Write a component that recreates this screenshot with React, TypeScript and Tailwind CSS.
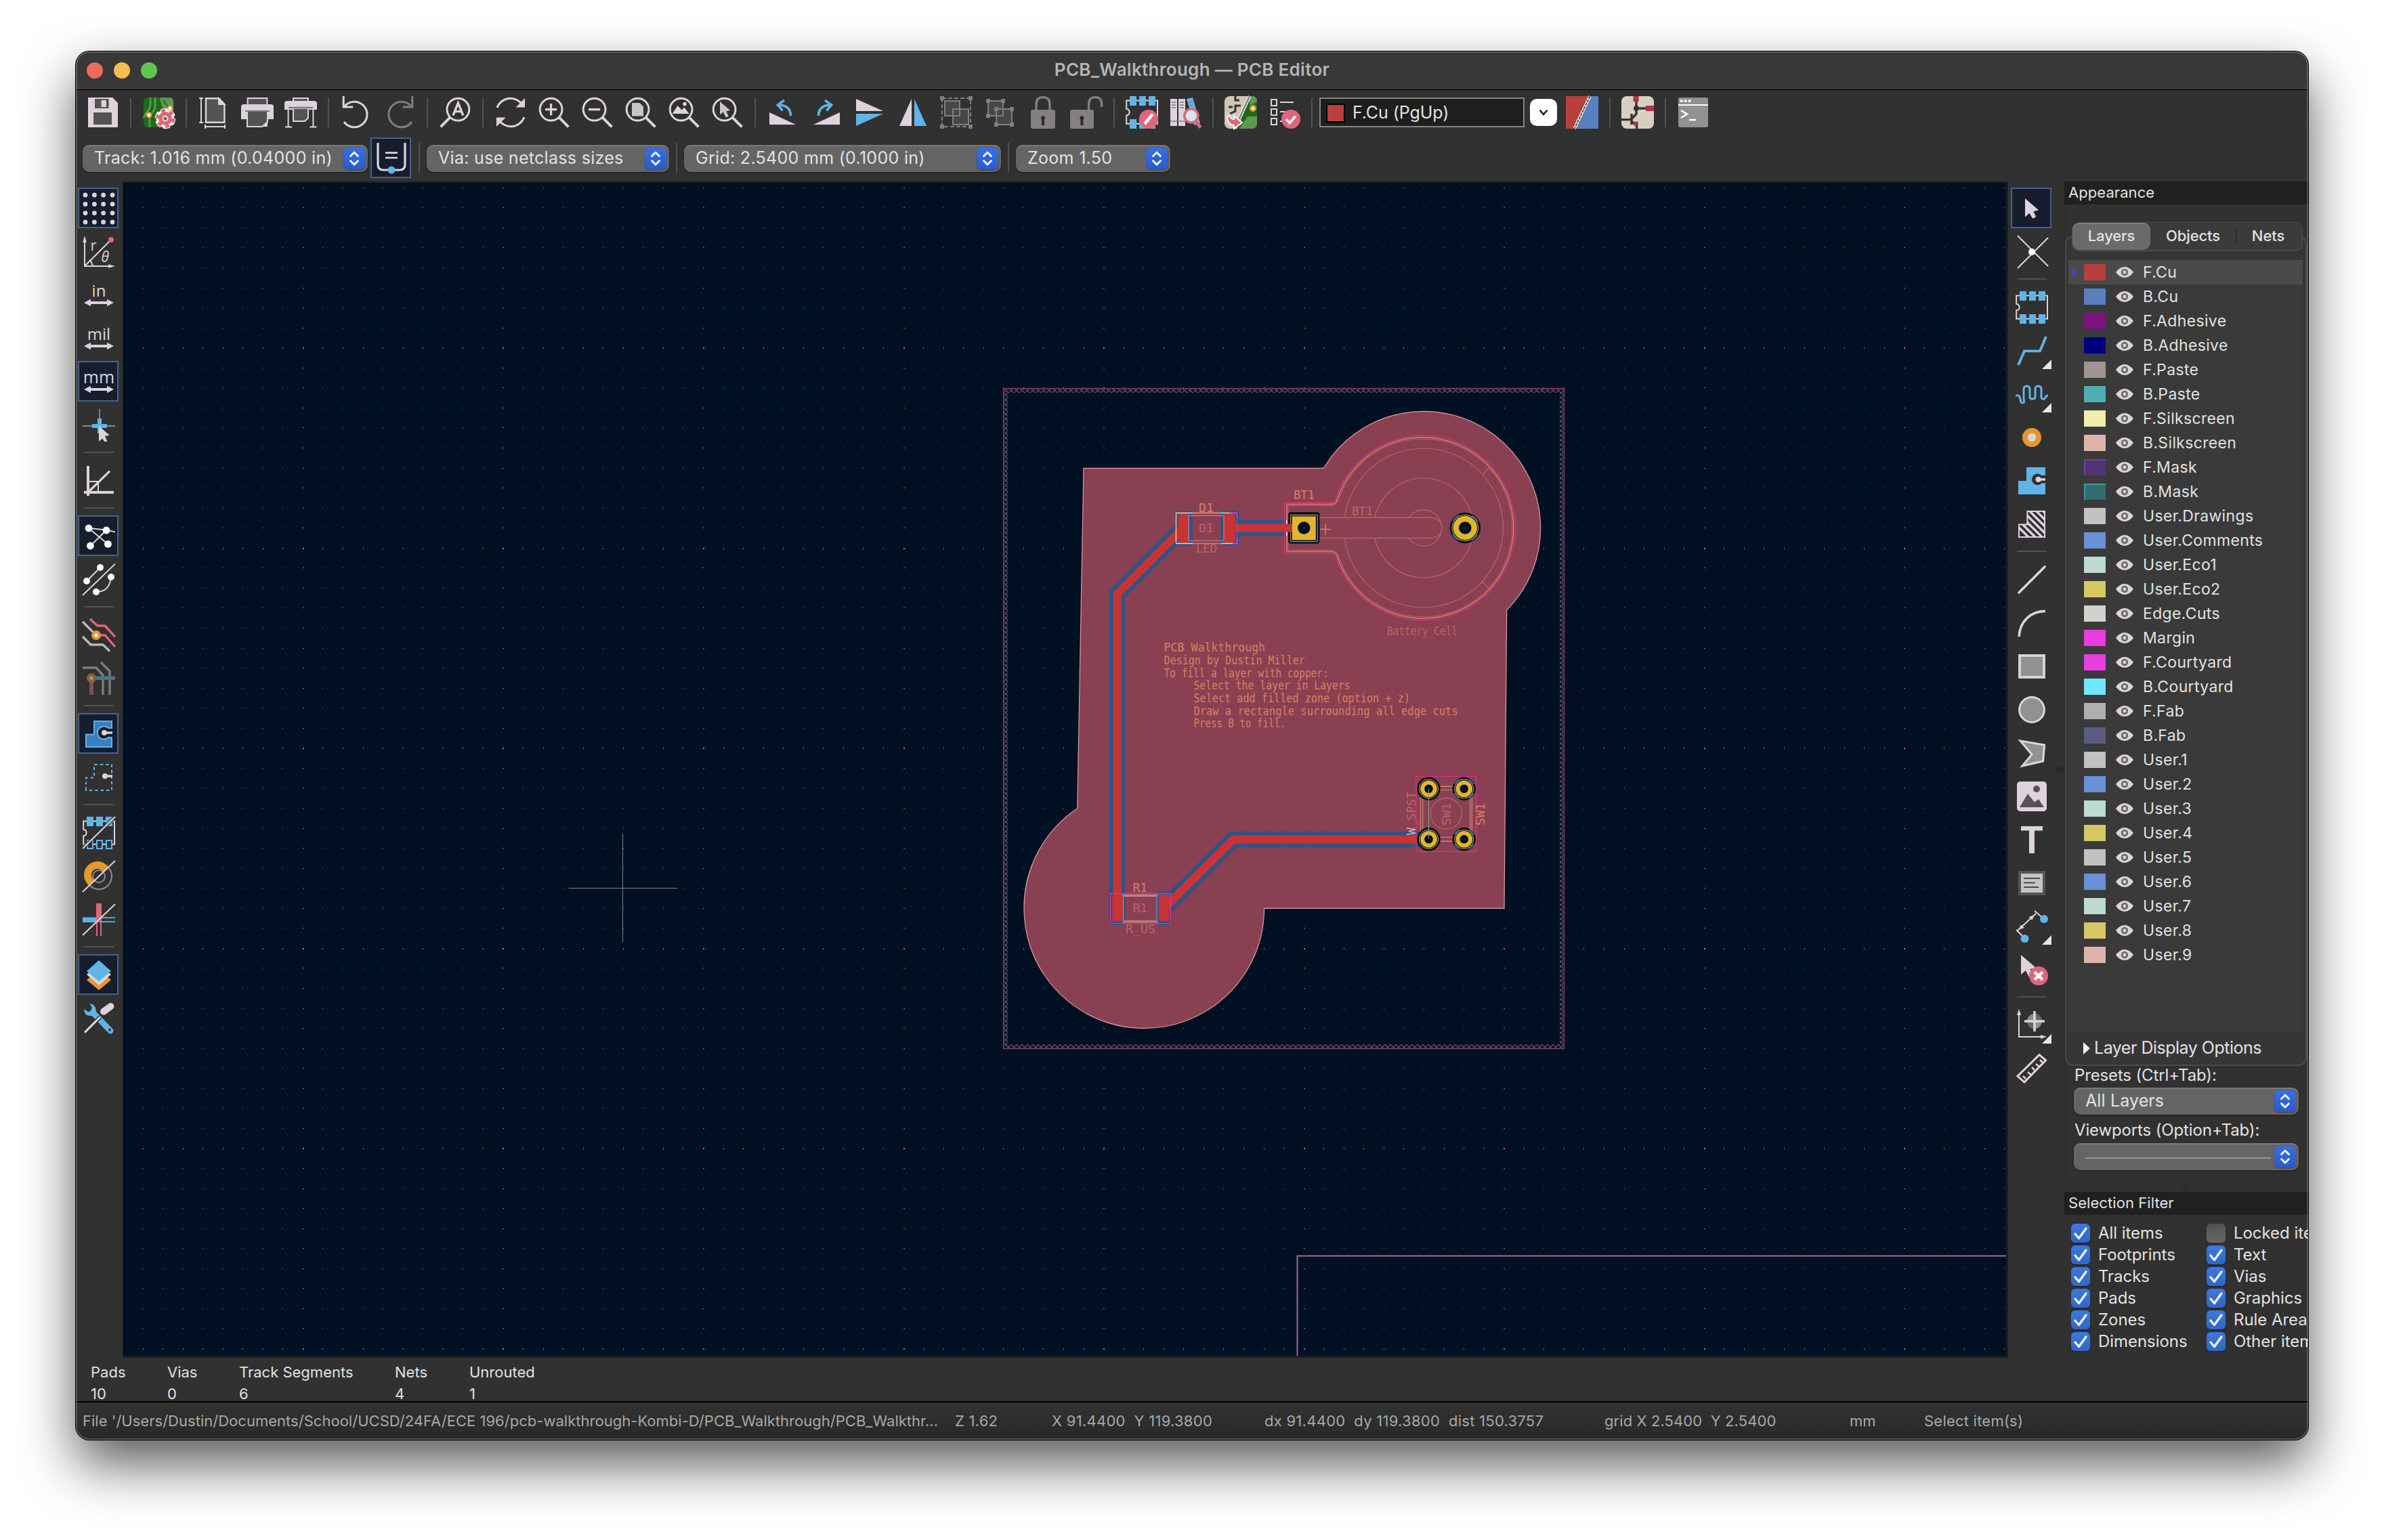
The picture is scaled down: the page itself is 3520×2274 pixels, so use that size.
import React from "react";

const L = "#ded3dd";
const B = "#60b4e6";
const P = "#e0667d";
const O = "#e59730";
const G = "#545454";
const D = "#7f7f7f";

type Drawing = React.ReactNode;

const fpPads = (fillBottom: boolean) => (
  <>
    <path d="M5 3.2H.6v6.3q2.2 0 2.2 2.3t-2.2 2.3v6.3h22.9V3.2z" fill="none" stroke={L} strokeWidth="1" />
    <path d="M3 0h5v7H3zM10 0h5v7h-5zM17 0h5v7h-5z" fill={B} />
    {fillBottom ? (
      <path d="M3 17h5v7H3zM10 17h5v7h-5zM17 17h5v7h-5z" fill={B} />
    ) : (
      <path d="M3.5 17.5h4v6h-4zM10.5 17.5h4v6h-4zM17.5 17.5h4v6h-4z" fill="#313131" stroke={B} />
    )}
  </>
);

const lens = (
  <>
    <circle cx="9.8" cy="9.8" r="8.2" fill="none" stroke={L} strokeWidth="1.5" />
    <path d="M15.6 15.6L22.7 22.7" stroke={L} strokeWidth="2" />
  </>
);

const unitArrow = <path d="M1 17.5l5-2.6v1.6h12v-1.6l5 2.6-5 2.6v-1.6H6v1.6z" fill={L} />;

const icons: Record<string, Drawing> = {
  save: (
    <>
      <path d="M1 1h18l4 4v18H1z" fill={L} />
      <path d="M6 2h10.3v7H6zM5 12h13.5v9H5z" fill={G} />
      <path d="M10.8 3h3.6v5h-3.6z" fill={L} />
    </>
  ),
  setup: (
    <>
      <rect x="1" y="1" width="22" height="22" rx="3" fill="#206a1b" />
      <path d="M6 1v5q0 3-2 5t-3 5M9.500 1v6q0 3-2 5t-2 6v5M14 1v3l4 4v4M23 10h-4l-4-3V1" fill="none" stroke="#5b9a50" strokeWidth="1.4" />
      <path d="M15 1h5q3 0 3 3v6l-5-4z" fill="#5b9a50" />
      <circle cx="5" cy="14" r="1.700" fill="#fff" stroke={O} strokeWidth="1" />
      <circle cx="20.500" cy="9" r="1.700" fill="#fff" stroke={O} strokeWidth="1" />
      <circle cx="17" cy="16.500" r="4.600" fill="none" stroke="#fff" strokeWidth="6" strokeDasharray="3.400 1.400" />
      <circle cx="17" cy="16.500" r="4.600" fill="none" stroke="#fff" strokeWidth="4.200" />
      <circle cx="17" cy="16.500" r="4.800" fill="none" stroke={P} strokeWidth="4.600" strokeDasharray="2.400 2.620" />
      <circle cx="17" cy="16.500" r="3.600" fill="#f6dfe3" stroke={P} strokeWidth="2.800" />
      <circle cx="17" cy="16.500" r="1.300" fill="#3f8a35" />
    </>
  ),
  page: (
    <>
      <path d="M6 1.600h9.500L19.700 6v13.400H6z" fill={G} stroke={L} strokeWidth="1.200" />
      <path d="M15.500 1.600V6h4.200z" fill={L} stroke={L} />
      <path d="M2.500 1v19M1 1.500h3M1 19.500h3M5.500 22.500h14.500M5.500 21v3M20 21v3" stroke={L} strokeWidth="1" />
    </>
  ),
  print: (
    <>
      <path d="M4.800 1.500h14.400V8H4.800z" fill={G} stroke={L} />
      <path d="M2 6h20q2 0 2 2v9h-4v-6H4v6H0V8q0-2 2-2z" fill={L} />
      <path d="M4.500 11h15v8l-4 3.500h-11z" fill={G} stroke={L} />
      <path d="M3 11h18" stroke="#7a7a7a" />
      <path d="M19.500 18.500v4h-4z" fill={L} />
    </>
  ),
  plot: (
    <>
      <path d="M6.500 1.500h11V5h-11z" fill={G} stroke={L} />
      <path d="M2 3.500h20q2 0 2 2V10H0V5.500q0-2 2-2z" fill={L} />
      <path d="M6.500 9h11v7l-2.500 2.500H6.500z" fill={G} stroke={L} />
      <path d="M3 8.500h18" stroke="#7a7a7a" strokeWidth="1.200" />
      <path d="M2.800 10v13M21.200 10v13M.5 22.800h5M18.700 22.800h5" stroke={L} strokeWidth="1" />
    </>
  ),
  undo: <path d="M2.600 0v8h7M3.300 7.600A9.400 9.400 0 1 1 3 19" fill="none" stroke={L} strokeWidth="1.500" />,
  redo: <path d="M21.400 0v8h-7M20.700 7.600A9.400 9.400 0 1 0 21 19" fill="none" stroke={D} strokeWidth="1.500" />,
  find: (
    <>
      <circle cx="14.200" cy="9.800" r="8.200" fill="none" stroke={L} strokeWidth="1.500" />
      <path d="M8.400 15.600L1.300 22.700" stroke={L} strokeWidth="2" />
      <path d="M10.500 14.200L14.200 5l3.700 9.200M11.800 11.300h4.800" fill="none" stroke={L} strokeWidth="1.700" />
    </>
  ),
  refresh: (
    <>
      <path d="M2 8.500A10.500 10.500 0 0 1 21 7M22 15.500A10.500 10.500 0 0 1 3 17" fill="none" stroke={L} strokeWidth="1.500" />
      <path d="M22.500 1.500v6.800h-6.800zM1.500 22.500v-6.800h6.800z" fill={L} />
    </>
  ),
  zoomIn: (
    <>
      {lens}
      <path d="M5.500 9.800h8.600M9.800 5.500v8.600" stroke={L} strokeWidth="1.600" />
    </>
  ),
  zoomOut: (
    <>
      {lens}
      <path d="M5.500 9.800h8.600" stroke={L} strokeWidth="1.600" />
    </>
  ),
  zoomFit: (
    <>
      {lens}
      <path d="M5.500 5h5.800l2.700 2.700v7H5.500z" fill="#c9c4c9" />
    </>
  ),
  zoomObj: (
    <>
      {lens}
      <path d="M3.300 13l4-6 3 3.200 1.800-2L15.800 13z" fill={L} />
      <circle cx="12.500" cy="5.800" r="1.400" fill={L} />
    </>
  ),
  zoomSel: (
    <>
      {lens}
      <path d="M6.500 4v9.800l2.400-2 2 4 2-1-1.800-3.700 3-.6z" fill="#c9c4c9" />
    </>
  ),
  rotCcw: (
    <>
      <path d="M2 12v9h19.500z" fill={L} />
      <path d="M17.800 14.500Q17.500 7 9.500 6.500" fill="none" stroke={B} strokeWidth="1.800" />
      <path d="M13 3L8.200 6.500l3.600 4.200" fill="none" stroke={B} strokeWidth="1.800" />
    </>
  ),
  rotCw: (
    <>
      <path d="M22 12v9H2.500z" fill={L} />
      <path d="M6.200 14.500Q6.500 7 14.500 6.500" fill="none" stroke={B} strokeWidth="1.800" />
      <path d="M11 3l4.800 3.500-3.600 4.200" fill="none" stroke={B} strokeWidth="1.800" />
    </>
  ),
  mirrorV: (
    <>
      <path d="M2 2v9h20z" fill={L} />
      <path d="M2 22v-9h20z" fill={B} />
    </>
  ),
  mirrorH: (
    <>
      <path d="M11 2v20H2z" fill={L} />
      <path d="M13 2v20h9z" fill={B} />
    </>
  ),
  group: (
    <>
      <path d="M1.500 1.500h21v21h-21z" fill="none" stroke={D} strokeDasharray="3 1.500" />
      <path d="M3.500 3.500h11v11h-11zM9.500 9.500h11.500v11.500H9.500z" fill="#474747" stroke={D} strokeWidth="1" />
      <path d="M0 0h3v3H0zM21 0h3v3h-3zM0 21h3v3H0zM21 21h3v3h-3z" fill={D} />
    </>
  ),
  ungroup: (
    <>
      <path d="M3.500 3.500h11v11h-11zM9.500 9.500h11.500v11.500H9.500z" fill="#474747" stroke={D} strokeWidth="1" />
      <path d="M2 2h3v3H2zM13 2h3v3h-3zM2 13h3v3H2zM8 8h3v3H8zM19.500 8h3v3h-3zM8 19.500h3v3H8zM19.500 19.500h3v3h-3z" fill={D} />
    </>
  ),
  lock: (
    <>
      <path d="M7 11V6q0-5.200 5-5.200T17 6v5" fill="none" stroke="#837f83" strokeWidth="1.700" />
      <rect x="3" y="10" width="18" height="14" rx="1.500" fill="#837f83" />
      <path d="M12 14.500a1.700 1.700 0 0 1 1 3v4h-2v-4a1.700 1.700 0 0 1 1-3z" fill="#2c2c2c" />
    </>
  ),
  unlock: (
    <>
      <path d="M13.800 11V6q0-5.200 4.800-5.200T23.300 6v2" fill="none" stroke="#837f83" strokeWidth="1.700" />
      <rect x="0" y="10" width="17.500" height="14" rx="1.500" fill="#837f83" />
      <path d="M8.700 14.500a1.700 1.700 0 0 1 1 3v4h-2v-4a1.700 1.700 0 0 1 1-3z" fill="#2c2c2c" />
    </>
  ),
  fpEdit: (
    <>
      {fpPads(true)}
      <circle cx="17" cy="17" r="7" fill={P} />
      <path d="M14 20.500l6-7.200" stroke="#fff" strokeWidth="2.200" />
    </>
  ),
  library: (
    <>
      <path d="M1 2h5v20H1zM7 2h5v20H7z" fill={L} />
      <path d="M13 2l4.500-1L23 20l-4.500 1.500z" fill={B} />
      <path d="M2 4.500h3M2 6.500h3M2 8.500h3M8 4.500h3M8 6.500h3M8 8.500h3M1 18.500h11M14 5l3.500-1M14.600 7.500l3.500-1" stroke={D} strokeWidth=".8" />
      <circle cx="16.400" cy="14.500" r="5" fill="#d6e8f2" stroke={P} strokeWidth="1.800" />
      <path d="M19.800 18.800l3.600 4.500" stroke={P} strokeWidth="2.400" />
    </>
  ),
  updatePcb: (
    <>
      <rect width="24" height="24" rx="4" fill="#cfc7b4" />
      <path d="M17 0h3q4 0 4 4v16q0 4-4 4H7z" fill="#206a1b" />
      <path d="M11 24l6-9h7v5q0 4-4 4z" fill="#5b9a50" />
      <path d="M18 0h2q4 0 4 4l-5 3z" fill="#5b9a50" />
      <path d="M18.500 0L7.500 24" stroke="#e8e8e8" strokeWidth="2.600" />
      <path d="M18.500 0L7.500 24" stroke="#777" strokeWidth="1" />
      <circle cx="21" cy="9" r="1.800" fill="#fff" stroke={O} strokeWidth="1.500" />
      <path d="M8 0v3h3M4 13l4-2V7h4M3 8h3" fill="none" stroke="#333" strokeWidth="1.500" />
      <path d="M2 15q0 6 5 6.500V24l6-4.500-6-5V17Q4 17 4 14z" fill={P} stroke="#fff" strokeWidth="1" />
    </>
  ),
  drc: (
    <>
      <path d="M2.500 2.500h4v4.500h-4zM2.500 9.500h4V14h-4zM2.500 16.500h4V21h-4z" fill="none" stroke={L} strokeWidth="1" />
      <path d="M9 4.500h10M9 11.500h10M9 18.500h6" stroke={L} strokeWidth="1" />
      <circle cx="17" cy="17" r="7" fill={P} />
      <path d="M13.500 17l2.600 2.800 4.300-5" fill="none" stroke="#fff" strokeWidth="1.800" />
    </>
  ),
  layerPair: (
    <>
      <path d="M0 0h24v24H0z" fill="#b8403a" />
      <path d="M18.300 0H24v24H6.600z" fill="#5a80c0" />
      <path d="M17.800 0L6.300 24" stroke="#e6e0e0" strokeWidth="2.200" />
      <path d="M17.800 0L6.300 24" stroke="#333" strokeWidth=".8" strokeDasharray="2 .8" />
    </>
  ),
  schematic: (
    <>
      <rect width="24" height="24" rx="4" fill="#d8d0bf" />
      <path d="M11 3v10l-3.500 4M11 9h8M0 17.300h7.500M7.500 13v8M8 19l3.300 2.500V24" fill="none" stroke="#333" strokeWidth="1.700" />
      <circle cx="11" cy="9" r="2" fill="#333" />
      <path d="M8.800 0h4v4h-4zM18 7h6v4h-6zM9.200 18.800h3.200v3H9.200z" fill="#b3304a" />
    </>
  ),
  terminal: (
    <>
      <rect x="1" y="1" width="22" height="22" rx="1.500" fill="#919191" />
      <path d="M1 6.500h22" stroke="#fff" strokeWidth="1" />
      <path d="M2.300 3.500h2M5.300 3.500h2M8.300 3.500h2" stroke="#fff" strokeWidth="1.600" />
      <path d="M3 10.500l4.500 2.800L3 16M9 17.500h5" fill="none" stroke="#fff" strokeWidth="1.300" />
    </>
  ),
  trackWidth: (
    <>
      <path d="M2 1v16q0 4 4 4h12q4 0 4-4V1" fill="none" stroke={L} strokeWidth="1.600" />
      <path d="M7.500 8.300h9M7.500 12h9" stroke={L} strokeWidth="1.300" />
      <circle cx="12" cy="21" r="2.800" fill={B} />
    </>
  ),
  grid: (
    <>
      {[2, 8.7, 15.3, 22].map((y) =>
        [2, 8.7, 15.3, 22].map((x) => <circle key={x + "-" + y} cx={x} cy={y} r="1.7" fill={L} />)
      )}
    </>
  ),
  polar: (
    <>
      <path d="M1.500 2v20.500H22M1.500 22.500L20.500 3.500M4.800 18q2.500 1.500 2.500 4.500" fill="none" stroke={L} strokeWidth="1" />
      <path d="M1.500 0l1.400 5H.1zM24 22.500l-5-1.400v2.800z" fill={L} />
      <circle cx="21" cy="3" r="2" fill={P} />
      <text x="5.800" y="11" fontSize="11" fill={L} fontFamily="Open Sans, sans-serif">r</text>
      <text x="13.800" y="19.500" fontSize="10.500" fill={L} fontStyle="italic" fontFamily="Open Sans, sans-serif">θ</text>
    </>
  ),
  inch: (
    <>
      <text x="12" y="13" fontSize="12" fill={L} textAnchor="middle" fontFamily="Open Sans, sans-serif">in</text>
      {unitArrow}
    </>
  ),
  mil: (
    <>
      <text x="12" y="13" fontSize="12" fill={L} textAnchor="middle" fontFamily="Open Sans, sans-serif">mil</text>
      {unitArrow}
    </>
  ),
  mm: (
    <>
      <text x="12" y="13" fontSize="12.500" fill={L} textAnchor="middle" fontFamily="Open Sans, sans-serif">mm</text>
      {unitArrow}
    </>
  ),
  cursor: (
    <>
      <path d="M0 12.500h24M12.500 0v12" stroke="#8c8c8c" strokeWidth=".9" />
      <path d="M7 12.500h11M12.500 7v11" stroke={B} strokeWidth="3" />
      <path d="M12 12.500v11.500l2.600-2.200 1.400 2.200h2.200l-1.700-4 3.400-.6z" fill={L} />
    </>
  ),
  angle: (
    <>
      <path d="M4 1v22M1 20.500h22" stroke={L} strokeWidth="2" />
      <path d="M4 20.500L20 4.800" stroke={L} strokeWidth="1.600" />
      <path d="M4 12.500h7.500v8" fill="none" stroke={L} strokeWidth="1" />
    </>
  ),
  ratsnest: (
    <>
      <path d="M4.500 6l14.200 11.700M5.700 19L17.500 7.500M4.500 6l13 1.200 6.500 1.600" fill="none" stroke={L} strokeWidth="1" />
      <g fill="#fff">
        <circle cx="4.500" cy="6" r="2.700" />
        <circle cx="17.500" cy="7.500" r="2.700" />
        <circle cx="5.700" cy="19" r="2.700" />
        <circle cx="18.700" cy="17.700" r="2.700" />
      </g>
    </>
  ),
  ratsCurved: (
    <>
      <path d="M13 3L3 13M0 23.500L24 .3M10 21q10 0 11-11" fill="none" stroke={L} strokeWidth="1" />
      <g fill="#fff">
        <circle cx="13" cy="3" r="2.500" />
        <circle cx="3" cy="13" r="2.500" />
        <circle cx="21" cy="10" r="2.500" />
        <circle cx="10" cy="21" r="2.500" />
      </g>
    </>
  ),
  netHighlight: (
    <>
      <path d="M0 2l7.500 7.500 2.500 2M0 13l6 6h9l5 4.700" fill="none" stroke="#b9b9b9" strokeWidth="1.700" />
      <path d="M5.500 0L11 5h5.500l7.500 8.200M12 12h4.500l7.500 8.500" fill="none" stroke={P} strokeWidth="1.700" />
      <circle cx="10" cy="12" r="2.400" fill="#fff" stroke={O} strokeWidth="2.200" />
    </>
  ),
  netDimmed: (
    <>
      <path d="M0 4h10l5 5.500V24M13.500 0L20 6.500V24" fill="none" stroke="#7c7c7c" strokeWidth="1.700" />
      <path d="M10 11.600h14" stroke="#4f7487" strokeWidth="2.700" />
      <path d="M6.500 13v11" stroke="#87505f" strokeWidth="2.900" />
      <circle cx="6.500" cy="11.600" r="2.400" fill="#9a9a9a" stroke="#8a6430" strokeWidth="2.200" />
    </>
  ),
  zoneFill: (
    <>
      <path d="M2.500 21.500v-9.300H8.500V2.500H21.500v5h-2.500a4.800 4.800 0 1 0 0 7h2.500v7z" fill="#3b7dc0" stroke={B} strokeWidth="1" />
      <path d="M16 11h6" stroke={L} strokeWidth="1.700" />
      <circle cx="16" cy="11" r="2" fill={L} />
    </>
  ),
  zoneOutline: (
    <>
      <path d="M2.500 21.500v-9.300H8.500V2.500H21.500v19z" fill="none" stroke={B} strokeWidth="1" strokeDasharray="2.200 2" />
      <path d="M16 11h6" stroke={L} strokeWidth="1.700" />
      <circle cx="16.500" cy="11" r="2" fill={L} />
    </>
  ),
  fpOutline: (
    <>
      {fpPads(false)}
      <path d="M0 23.500L24 0" stroke="#313131" strokeWidth="3" opacity=".6" />
      <path d="M0 23.500L24 0" stroke={L} strokeWidth="1" />
    </>
  ),
  padOutline: (
    <>
      <circle cx="12" cy="12" r="9.500" fill="none" stroke="#8c8c8c" />
      <circle cx="12" cy="12" r="4.500" fill="none" stroke="#8c8c8c" />
      <path d="M5 19A10 10 0 1 1 19 5l-4 4a4.500 4.500 0 1 0-6 6z" fill={O} />
      <path d="M0 23.500L24 .5" stroke={L} strokeWidth="1" />
    </>
  ),
  trackOutline: (
    <>
      <path d="M10 0h4v10l-4 4z" fill={P} />
      <path d="M10.500 13v11M13.500 12v12" stroke={P} strokeWidth="1" />
      <path d="M0 10.200h12l-2 3.800H0z" fill={B} />
      <path d="M13 10.600h11M12 13.600h12" stroke={B} strokeWidth=".9" />
      <path d="M10 10h4v2l-2.500 2H10z" fill={P} />
      <path d="M0 23.500L24 .5" stroke={L} strokeWidth="1" />
    </>
  ),
  layers: (
    <>
      <path d="M12 7.500l9 8-9 7.500-9-7.500z" fill={O} />
      <path d="M12 3.500l9 8-9 8-9-8z" fill={L} />
      <path d="M12 1l9 8-9 7.800L3 9z" fill={B} />
    </>
  ),
  tools: (
    <>
      <path d="M7.500 7.500L20.500 21" stroke={B} strokeWidth="4.400" strokeLinecap="round" />
      <path d="M5 1Q9.500 1 10 6.500L7 10Q1 10.500 1 5l3 2 2.500-.6L6.800 3.500z" fill={B} />
      <circle cx="20" cy="20.300" r="1" fill="#313131" />
      <path d="M1.500 22.300L13 10.800" stroke="#313131" strokeWidth="3" />
      <path d="M1.500 22.300L13 10.800" stroke={L} strokeWidth="1.500" />
      <path d="M15.500 6.800L20.700 3" stroke={L} strokeWidth="5" strokeLinecap="round" />
    </>
  ),
  select: <path d="M7 4.500V18.200l3.200-2.800 2.400 4 2.600-1.300-2-4 3.800-1z" fill={L} />,
  netInspect: (
    <>
      <path d="M1.500 0L24 22.500M24 1.500L1.500 24" stroke={L} strokeWidth="1" />
      <circle cx="12" cy="12" r="2.500" fill="#fff" />
    </>
  ),
  footprint: fpPads(true),
  route: <path d="M2 22.500L6.500 12.200H18L22.500 1.500" fill="none" stroke={B} strokeWidth="1.900" />,
  tune: (
    <path
      d="M0 13h2c2 0 .8 5.500 3 5.500S6 17 6 15V8.500Q6 6 8.200 6t2.300 2.500V14q0 1.600 2 1.600t2-1.600V8.500Q14.500 6 16.700 6T19 8.500V14q0 1.600 1.800 1.600C22.300 15.600 21.500 13 24 13"
      fill="none"
      stroke={B}
      strokeWidth="1.500"
    />
  ),
  via: (
    <>
      <circle cx="12" cy="12" r="7" fill={O} />
      <circle cx="12" cy="12" r="3.100" fill="#d8d8d8" />
    </>
  ),
  zoneAdd: (
    <>
      <path d="M2 22V12h6V2h14v6h-2.800a4.200 4.200 0 1 0 0 5.800H22V22z" fill={B} />
      <path d="M16 11h6" stroke={L} strokeWidth="1.700" />
      <circle cx="16.800" cy="11" r="2" fill={L} />
    </>
  ),
  ruleArea: (
    <>
      <clipPath id="rule-area-clip">
        <path d="M2 22V12h6.500V2H22v20z" />
      </clipPath>
      <path d="M-1 11l14 14M3 10l14 14M6 8l16 16M6 3l17 17M8 0l15 15M12-1l12 12M17-1l8 8" stroke={L} strokeWidth="1.700" clipPath="url(#rule-area-clip)" />
      <path d="M2.500 21.500v-9.300H8.700V2.500H21.500v19z" fill="none" stroke={L} strokeWidth="1" />
    </>
  ),
  line: <path d="M2.500 21.500l19-19" stroke={L} strokeWidth="1.800" strokeLinecap="round" />,
  arc: <path d="M2.600 22C3 11 11 3.200 22 3.200" fill="none" stroke={L} strokeWidth="1.800" />,
  rect: <rect x="3" y="4" width="18" height="16" fill="#919191" stroke={L} strokeWidth="1.900" />,
  circle: <circle cx="12" cy="12" r="9.200" fill="#919191" stroke={L} strokeWidth="1.500" />,
  polygon: <path d="M3.500 3l17.800 3-1 12L5 21.500l7-8.500z" fill="#919191" stroke={L} strokeWidth="1.500" />,
  image: (
    <>
      <rect x="1" y="1" width="22" height="22" rx="2.500" fill={L} />
      <path d="M3 20l6-10 5 6.200 3-2.200 4 6z" fill={G} />
      <circle cx="15.500" cy="6.500" r="2.500" fill={G} />
    </>
  ),
  text: <path d="M4 2h16v3.200h-6V22h-4V5.200H4z" fill={L} />,
  textBox: (
    <>
      <path d="M2 3h20v18H2z" fill={G} />
      <path d="M4 5h16v14H4z" fill="#c5c5c5" />
      <path d="M6 8.500h12M6 11.800h8.500M6 15h11" stroke="#4a4a4a" strokeWidth="1" />
    </>
  ),
  dimension: (
    <>
      <path d="M1 15.500L15 2.500M.5 14.500L7 21M14 .5l7 6" stroke={L} strokeWidth="1" />
      <path d="M2 14.500l4.500-1.500L4 10.800zM14 3.500L9.800 5l2.400 2.400z" fill={L} />
      <circle cx="21" cy="6.500" r="3" fill={B} />
      <circle cx="6.800" cy="21" r="3" fill={B} />
    </>
  ),
  remove: (
    <>
      <path d="M4 1v14.500l3.500-3 2.500 5 3-1.500-2.300-4.500 4.600-.7z" fill={L} />
      <circle cx="17" cy="16.500" r="7" fill={P} />
      <path d="M14 13.700l6 5.600M20 13.700l-6 5.600" stroke="#fff" strokeWidth="2.200" />
    </>
  ),
  origin: (
    <>
      <path d="M2.500 3v17.500H20" fill="none" stroke={L} strokeWidth="1" />
      <path d="M2.500 0L4 4.500H1zM23 20.500l-4.500-1.500v3z" fill={L} />
      <circle cx="14" cy="9" r="5.500" fill="#8c8c8c" />
      <path d="M14 3.500A5.500 5.500 0 0 1 19.500 9H14zM14 14.500A5.500 5.500 0 0 1 8.500 9H14z" fill="#666" />
      <path d="M6.500 9h15M14 1.500v15" stroke={L} strokeWidth="1.800" />
    </>
  ),
  ruler: (
    <>
      <path d="M1.500 17.500L17.500 1.800l4.800 4L6.500 22z" fill="none" stroke={L} strokeWidth="1.500" />
      <path d="M5.500 17.500l2 2M9 14.500l2.500 2M12 11l2 2M15 8.500l2.500 2M18 5.500l2 2" stroke={L} strokeWidth="1.300" />
    </>
  ),
};

function Icon({ name, className = "size-12" }: { name: string; className?: string }) {
  return (
    <svg viewBox="0 0 24 24" className={"block shrink-0 overflow-visible " + className}>
      {icons[name]}
    </svg>
  );
}

const topTools = [
  "save", "|", "setup", "|", "page", "print", "plot", "|", "undo", "redo", "|", "find", "|", "refresh", "zoomIn", "zoomOut",
  "zoomFit", "zoomObj", "zoomSel", "|", "rotCcw", "rotCw", "mirrorV", "mirrorH", "group", "ungroup", "lock", "unlock", "|",
  "fpEdit", "library", "|", "updatePcb", "drc", "|",
];

const leftTools = [
  "grid*", "polar", "inch", "mil", "mm*", "cursor", "|", "angle", "|", "ratsnest*", "ratsCurved", "|", "netHighlight", "netDimmed",
  "|", "zoneFill*", "zoneOutline", "|", "fpOutline", "padOutline", "trackOutline", "|", "layers*", "tools",
];

const rightTools = [
  "select*", "netInspect", "|", "footprint", "route>", "tune>", "via", "zoneAdd", "ruleArea", "|", "line", "arc", "rect", "circle",
  "polygon", "image", "text", "textBox", "dimension>", "remove", "|", "origin>", "ruler",
];

function VSep({ className = "mx-2" }: { className?: string }) {
  return <div className={"h-11 w-[2px] shrink-0 bg-[#525252] " + className} />;
}

function TopTool({ name }: { name: string }) {
  return name === "|" ? (
    <VSep />
  ) : (
    <div className="flex w-16 shrink-0 justify-center">
      <Icon name={name} />
    </div>
  );
}

function SideBar({ tools }: { tools: string[] }) {
  return (
    <div className="flex w-16 shrink-0 flex-col pt-[5px]">
      {tools.map((t, i) => {
        if (t === "|") return <div key={i} className="my-2 ml-[11px] h-[2px] w-11 shrink-0 bg-[#525252]" />;
        const active = t.endsWith("*");
        const flyout = t.endsWith(">");
        const name = t.replace(/[*>]/, "");
        return (
          <div key={i} className="flex h-16 shrink-0 items-center justify-center">
            <div
              className={
                "relative flex size-[60px] items-center justify-center border-2 pt-[2px] pl-[2px] " +
                (active ? "border-[#46628a] bg-[#151d2e]" : "border-transparent")
              }
            >
              <Icon name={name} />
              {flyout && (
                <svg viewBox="0 0 14 14" className="absolute -right-[2px] bottom-0 size-[14px]">
                  <path d="M14 0v14H0z" fill="#e6e6e6" />
                </svg>
              )}
            </div>
          </div>
        );
      })}
    </div>
  );
}

function Stepper() {
  return (
    <div className="flex size-8 shrink-0 items-center justify-center rounded-[7px] bg-linear-to-b from-[#376fe3] to-[#2a5bcb] shadow-[0_1px_2px_rgba(0,0,0,0.4)]">
      <svg viewBox="0 0 32 32" className="size-8">
        <path d="M10.500 12.500L16 7l5.500 5.500M10.500 19.500L16 25l5.500-5.500" fill="none" stroke="#eef2fb" strokeWidth="3" strokeLinecap="round" strokeLinejoin="round" />
      </svg>
    </div>
  );
}

function Select({ className, children }: { className: string; children?: React.ReactNode }) {
  return (
    <div
      className={
        "flex h-10 shrink-0 items-center justify-between rounded-[10px] bg-[#656565] pr-1 pl-[17px] shadow-[inset_0_2px_0_#7a7a7a,0_1px_2px_rgba(0,0,0,0.45)] " +
        className
      }
    >
      {children}
      <Stepper />
    </div>
  );
}

const layerRows: [string, string][] = [
  ["F.Cu", "bg-[#b8403a]"],
  ["B.Cu", "bg-[#5a80c0]"],
  ["F.Adhesive", "bg-[#7a147e]"],
  ["B.Adhesive", "bg-[#00007f]"],
  ["F.Paste", "bg-[#9f9490]"],
  ["B.Paste", "bg-[#52adb2]"],
  ["F.Silkscreen", "bg-[#f1edaa]"],
  ["B.Silkscreen", "bg-[#e0b3a9]"],
  ["F.Mask", "bg-[#513474] shadow-[inset_2px_2px_1px_#7c40a8]"],
  ["B.Mask", "bg-[#316d70] shadow-[inset_2px_2px_1px_#3f9a97]"],
  ["User.Drawings", "bg-[#c2c2c2]"],
  ["User.Comments", "bg-[#6891d6]"],
  ["User.Eco1", "bg-[#bcdbd2]"],
  ["User.Eco2", "bg-[#d5c763]"],
  ["Edge.Cuts", "bg-[#d0d2cd]"],
  ["Margin", "bg-[#ea3ddf]"],
  ["F.Courtyard", "bg-[#ea3ddf]"],
  ["B.Courtyard", "bg-[#6fe7ff]"],
  ["F.Fab", "bg-[#afafaf]"],
  ["B.Fab", "bg-[#5a5d81]"],
  ["User.1", "bg-[#c2c2c2]"],
  ["User.2", "bg-[#6891d6]"],
  ["User.3", "bg-[#bcdbd2]"],
  ["User.4", "bg-[#d5c763]"],
  ["User.5", "bg-[#c2c2c2]"],
  ["User.6", "bg-[#6891d6]"],
  ["User.7", "bg-[#bcdbd2]"],
  ["User.8", "bg-[#d5c763]"],
  ["User.9", "bg-[#e0b3a9]"],
];

function Eye() {
  return (
    <svg viewBox="0 0 28 20" className="ml-[14px] h-5 w-7 shrink-0">
      <path d="M1 10Q7 2 14 2t13 8q-6 8-13 8T1 10z" fill={L} />
      <circle cx="14" cy="10" r="5.200" fill="#6e6a6e" />
      <circle cx="14" cy="10" r="2.400" fill={L} />
    </svg>
  );
}

function LayerRow({ name, swatch, active }: { name: string; swatch: string; active: boolean }) {
  return (
    <div className={"flex h-9 shrink-0 items-center pl-[6px] " + (active ? "bg-[#4a4a4a]" : "")}>
      <svg viewBox="0 0 6 12" className="h-3 w-[6px] shrink-0">
        {active && <path d="M0 0l6 6-6 6z" fill="#3f44e8" />}
      </svg>
      <div className={"ml-[11px] h-6 w-8 shrink-0 " + swatch} />
      <Eye />
      <div className="ml-[13px] text-[23px] tracking-[0.015em]">{name}</div>
    </div>
  );
}

function Check({ on, label }: { on: boolean; label: string }) {
  return (
    <div className="flex h-8 items-center">
      {on ? (
        <div className="flex size-7 shrink-0 items-center justify-center rounded-[6px] bg-linear-to-b from-[#3d79dd] to-[#2f66c8] shadow-[0_1px_1px_rgba(0,0,0,0.4)]">
          <svg viewBox="0 0 28 28" className="size-7">
            <path d="M6 15l5.500 6.500L22 7" fill="none" stroke="#edf2fb" strokeWidth="3.400" strokeLinecap="round" strokeLinejoin="round" />
          </svg>
        </div>
      ) : (
        <div className="size-7 shrink-0 rounded-[6px] bg-linear-to-b from-[#525252] to-[#686868]" />
      )}
      <div className="ml-[12px] text-[24px] tracking-[-0.002em] whitespace-nowrap">{label}</div>
    </div>
  );
}

const STEP = 29.555;
function dots() {
  let d = "";
  for (let i = 0; i < 94; i++) {
    for (let j = 0; j < 59; j++) {
      const x = Math.floor(211 + i * STEP);
      const y = Math.floor(277.3 + j * STEP);
      const w = i % 10 === 8 ? 2 : 1;
      const h = j % 10 === 8 ? 2 : 1;
      d += `M${x} ${y}h${w}v${h}h-${w}z`;
    }
  }
  return d;
}
const gridPath = dots();

const SILK = "#d9805f";
const FAB = "#bd6560";
const CLR = "#2e5487";
const RED = "#c83434";
const DARK = "#000f22";
const YEL = "#e2b52f";
const COPPER = "#8a4053";

function T({ x, y, w, fill = SILK, children, rotate }: { x: number; y: number; w: number; fill?: string; children: string; rotate?: boolean }) {
  return (
    <text
      x={x}
      y={y}
      fill={fill}
      fontSize="18"
      fontFamily="DejaVu Sans Mono, monospace"
      textLength={w}
      lengthAdjust="spacingAndGlyphs"
      transform={rotate ? `rotate(-90 ${x} ${y})` : undefined}
    >
      {children}
    </text>
  );
}

function SwitchPad({ x, y, blue }: { x: number; y: number; blue?: boolean }) {
  return (
    <g>
      <circle cx={x} cy={y} r="17.200" fill={DARK} />
      {blue && <circle cx={x} cy={y} r="15.500" fill="none" stroke={CLR} strokeWidth="3" strokeDasharray="10 14.350" strokeDashoffset="-7" />}
      <circle cx={x} cy={y} r="14" fill={DARK} stroke={YEL} strokeWidth="1" />
      <circle cx={x} cy={y} r="9.300" fill="none" stroke={YEL} strokeWidth="6" />
    </g>
  );
}

function Canvas() {
  return (
    <svg viewBox="182 270 2780 1732" className="block h-[1732px] w-[2780px] bg-[#001023]">
      <defs>
        <pattern id="hatch" width="8" height="7" patternUnits="userSpaceOnUse" x="1481" y="573">
          <path d="M0 0l8 7" stroke="#3a62a0" strokeWidth="1.300" />
          <path d="M8 0L0 7" stroke="#93384f" strokeWidth="1.300" />
        </pattern>
      </defs>
      <path d={gridPath} fill="#858d95" />

      <path d="M1915.500 2002V1854.500H2962" fill="none" stroke="#b0609a" strokeWidth="2" />
      <path d="M840 1311.500h160M919.500 1231v160" stroke="#85807d" strokeWidth="1" />

      <path d="M1481 573H2310V1549H1481zM1488 580V1542H2303V580z" fill="url(#hatch)" fillRule="evenodd" />
      <rect x="1481.500" y="573.500" width="828" height="975" fill="none" stroke="#8a3a55" strokeWidth="1.300" />

      <path
        d="M1600 691.300H1954.300A172.350 172.350 0 1 1 2224.700 901L2221 1341.400H1866.600A177.300 177.300 0 1 1 1590.700 1193.700z"
        fill="#9d475a"
        fillOpacity=".88"
        stroke="#d8a09c"
        strokeWidth="1.200"
      />

      {/* clearances */}
      <g fill="none" stroke={CLR} strokeWidth="23.500" strokeLinejoin="round">
        <path d="M1815 779.500H1900" />
        <path d="M1747 779.500L1649.600 877V1341" />
        <path d="M1719 1341L1821 1239.500H2095" />
      </g>
      <g fill={CLR}>
        <rect x="1735" y="754" width="26" height="51.500" rx="5" />
        <rect x="1802.500" y="754" width="27" height="51.500" rx="5" />
        <rect x="1637.300" y="1316" width="24.500" height="50" rx="5" />
        <rect x="1706.500" y="1316" width="23.500" height="50" rx="5" />
      </g>

      {/* courtyards */}
      <g fill="none" stroke="#dd2f86" strokeWidth="1.300">
        <path d="M1896.700 742.300H1966Q1970 742 1972 736.500A136.300 136.300 0 1 1 1972 822.500Q1970 817.500 1966 817.300H1896.700z" />
        <rect x="2091" y="1146.300" width="88.300" height="111" />
      </g>

      {/* battery holder */}
      <g fill="none">
        <path d="M1900 744.500H1966Q1972.500 744.500 1974.300 737.500A133.600 133.600 0 1 1 1974.300 821.500Q1972.500 814.500 1966 814.500H1900z" stroke={SILK} strokeWidth="1.500" />
        <path d="M1902 750V746.500H1968Q1974.500 744 1977 736.500A131.400 131.400 0 1 1 1977 822.500Q1974.500 814 1968 812.500H1902z" stroke={FAB} strokeWidth="1" />
        <circle cx="2101.900" cy="779.500" r="117.500" stroke={FAB} strokeWidth="1.200" />
        <circle cx="2101.900" cy="779.500" r="73.500" stroke={FAB} strokeWidth="1.200" />
        <circle cx="2101.900" cy="779.500" r="26.700" stroke={FAB} strokeWidth="1.200" />
        <path d="M2199 691l-10 9.500M2199 869l-11-10" stroke={FAB} strokeWidth="1.200" />
      </g>
      <path d="M1943 764.400H2114Q2128.800 767 2128.800 779.500T2114 794.600H1943z" fill={COPPER} stroke={FAB} strokeWidth="1.200" />

      {/* copper tracks */}
      <g fill="none" stroke={RED} strokeWidth="12" strokeLinejoin="round">
        <path d="M1747 779.500L1649.600 877V1350" />
        <path d="M1719 1341L1821 1239.500H2109" />
      </g>
      <g fill={RED}>
        <rect x="1739.500" y="759" width="16" height="42.500" rx="3.500" />
        <rect x="1806.500" y="759" width="17.500" height="42.500" rx="3.500" />
        <rect x="1642.300" y="1321" width="15.500" height="39.500" rx="3.500" />
        <rect x="1711" y="1321" width="15.500" height="39.500" rx="3.500" />
      </g>

      <rect x="1902.200" y="756.300" width="46.200" height="46.500" rx="4" fill={DARK} />
      <rect x="1905.700" y="760.500" width="39.500" height="39.200" fill="none" stroke={YEL} strokeWidth="1" />
      <rect x="1907.800" y="762.500" width="35" height="35" fill={YEL} />
      <path d="M1815 779.500H1908" stroke={RED} strokeWidth="12" />
      <circle cx="1925.300" cy="779.500" r="9.300" fill={DARK} />
      <path d="M1899.700 768v5.500M1899.700 785.500v6" stroke="#e9dfc8" strokeWidth="1.500" />

      <circle cx="2163.300" cy="779.500" r="22.800" fill={DARK} />
      <circle cx="2163.300" cy="779.500" r="20.500" fill="none" stroke={CLR} strokeWidth="3" strokeDasharray="12 20.200" strokeDashoffset="-10" />
      <circle cx="2163.300" cy="779.500" r="19.300" fill={DARK} stroke={YEL} strokeWidth="1" />
      <circle cx="2163.300" cy="779.500" r="13.500" fill="none" stroke={YEL} strokeWidth="8.400" />
      <path d="M1949 781.500h16M1957 773.500v16" stroke={SILK} strokeWidth="1.500" />

      {/* LED and resistor outlines */}
      <g fill="none" strokeWidth="1.300">
        <path d="M1755 761.500H1807V798.300H1755z" stroke="#c58f96" strokeWidth="1" />
        <path d="M1736.500 802.500V757.500H1820" stroke="#ecdcae" />
        <path d="M1761 757.500H1803M1761 802.500H1803" stroke={SILK} />
        <path d="M1736.500 802.500H1761M1803 802.500H1820" stroke="#ecdcae" />
        <path d="M1815 757.500H1826.500V765M1826.500 795V802.500H1820" stroke="#e546e0" />
        <path d="M1826.500 765V795" stroke="#6f5ab8" />
        <path d="M1639.500 1319.500H1728.500V1363.700H1639.500z" stroke="#d83a9e" />
        <path d="M1657 1321.800H1710M1657 1361.300H1710" stroke="#e8ad95" />
        <path d="M1658.500 1323.500H1708V1359.300H1658.500z" stroke="#c58f96" strokeWidth="1" />
        <path d="M1781.500 769v21M1775 779.500h13M1683.500 1331v21M1677 1341.500h13" stroke="#a83a80" strokeWidth="1.500" />
      </g>

      {/* switch */}
      <g fill="none">
        <path d="M2126.500 1161.300H2145M2126.500 1242.300H2145" stroke={SILK} strokeWidth="1.500" />
        <path d="M2097.500 1175.300V1228.700M2173.300 1175.300V1228.700" stroke={SILK} strokeWidth="1.500" />
        <rect x="2100.800" y="1166.700" width="69.600" height="69.600" stroke="#c98f8c" strokeWidth="1" />
        <circle cx="2135.300" cy="1201.400" r="23" stroke={FAB} strokeWidth="1.200" />
      </g>
      <SwitchPad x={2109.5} y={1164.7} />
      <SwitchPad x={2161.7} y={1164.7} blue />
      <SwitchPad x={2109.5} y={1239.3} />
      <SwitchPad x={2161.7} y={1239.3} blue />
      <path d="M2109.500 1165V1239" stroke="#77a7a0" strokeWidth="1" />

      <T x={1770} y={755.6} w={22}>D1</T>
      <T x={1770} y={786} w={22} fill={FAB}>D1</T>
      <T x={1766} y={816.2} w={31} fill={FAB}>LED</T>
      <T x={1910} y={736.7} w={31}>BT1</T>
      <T x={1996} y={760.8} w={31} fill={FAB}>BT1</T>
      <T x={2048} y={937.8} w={104} fill={FAB}>Battery_Cell</T>
      <T x={1672.5} y={1317} w={21.5}>R1</T>
      <T x={1672.5} y={1347.3} w={21.5} fill={FAB}>R1</T>
      <T x={1662} y={1377.7} w={44} fill={FAB}>R_US</T>
      <T x={2191.8} y={1219} w={33.5} rotate>SW1</T>
      <T x={2142.4} y={1219} w={33.5} fill={FAB} rotate>SW1</T>
      <T x={2090.3} y={1233} w={11} fill="#c9b4b0" rotate>W</T>
      <T x={2090.3} y={1222} w={53} fill={FAB} rotate>_SPST</T>

      <T x={1718.6} y={962.2} w={149.5}>PCB Walkthrough</T>
      <T x={1718.6} y={980.9} w={208.2}>Design by Dustin Miller</T>
      <T x={1718.6} y={999.6} w={243}>To fill a layer with copper:</T>
      <T x={1762.4} y={1018.3} w={231.3}>Select the layer in Layers</T>
      <T x={1762.4} y={1037} w={319.5}>Select add filled zone (option + z)</T>
      <T x={1762.4} y={1055.7} w={390.3}>Draw a rectangle surrounding all edge cuts</T>
      <T x={1762.4} y={1074.4} w={136}>Press B to fill.</T>
    </svg>
  );
}

const filters: [string, boolean][] = [
  ["All items", true], ["Locked items", false],
  ["Footprints", true], ["Text", true],
  ["Tracks", true], ["Vias", true],
  ["Pads", true], ["Graphics", true],
  ["Zones", true], ["Rule Areas", true],
  ["Dimensions", true], ["Other items", true],
];

function PanelHeader({ children }: { children: string }) {
  return (
    <div className="flex h-[34px] shrink-0 items-center bg-[#202020] pb-[2px] pl-[6px] text-[22px] tracking-[0.003em]">{children}</div>
  );
}

function SidePanel() {
  return (
    <div className="flex w-[360px] shrink-0 flex-col overflow-hidden">
      <PanelHeader>Appearance</PanelHeader>
      <div className="flex h-[1442px] shrink-0 flex-col border-l border-[#2a2a2a] pt-[26px]">
        <div className="z-10 mr-2 ml-[10px] flex h-[43px] shrink-0 rounded-[12px] border border-b-2 border-[#4c4c4c] bg-[#3b3b3b] text-[22px] font-medium tracking-[-0.005em]">
          <div className="flex h-10 w-[115px] items-center justify-center rounded-[11px] bg-[#6a6a6a] pb-[1px] shadow-[inset_0_2px_0_#7c7c7c]">Layers</div>
          <div className="flex h-10 w-[126px] items-center justify-center pb-[1px]">Objects</div>
          <div className="mt-[9px] h-6 w-[2px] bg-[#2f2f2f]" />
          <div className="flex h-10 flex-1 items-center justify-center pr-[4px] pb-[1px]">Nets</div>
        </div>
        <div className="-mt-[23px] mr-[2px] flex h-[1226px] shrink-0 flex-col rounded-[12px] border-2 border-[#4a4a4a] bg-[#363636] pt-[34px]">
          <div className="mr-1 ml-[3px] flex h-[1140px] shrink-0 flex-col bg-[#3a3a3a]">
            {layerRows.map(([name, swatch], i) => (
              <LayerRow key={name} name={name} swatch={swatch} active={i === 0} />
            ))}
          </div>
          <div className="flex flex-1 items-center pb-[1px] pl-[25px] text-[25px] tracking-[-0.02em]">
            <svg viewBox="0 0 10 18" className="mr-[6px] h-[18px] w-[10px]">
              <path d="M0 0l10 9-10 9z" fill="#f0f0f0" />
            </svg>
            Layer Display Options
          </div>
        </div>
        <div className="flex h-8 shrink-0 items-center pb-[4px] pl-[14px] text-[24px] tracking-[-0.006em]">Presets (Ctrl+Tab):</div>
        <Select className="ml-[13px] w-[332px]">
          <span className="text-[25px] tracking-[0.005em]">All Layers</span>
        </Select>
        <div className="flex h-[42px] shrink-0 items-center pt-[4px] pl-[14px] text-[24px] tracking-[-0.006em]">Viewports (Option+Tab):</div>
        <Select className="ml-[13px] w-[332px]">
          <div className="mt-[3px] h-[2px] w-[274px] bg-[#989898]" />
        </Select>
      </div>
      <div className="flex h-4 shrink-0 justify-center pt-[3px]">
        <div className="size-3 rounded-full bg-[#2c2c2c]" />
      </div>
      <PanelHeader>Selection Filter</PanelHeader>
      <div className="ml-[10px] grid grid-cols-[200px_200px] pt-[11px]">
        {filters.map(([label, on]) => (
          <Check key={label} label={label} on={on} />
        ))}
      </div>
    </div>
  );
}

const stats: [string, string, string][] = [
  ["Pads", "10", "w-[113px]"],
  ["Vias", "0", "w-[106px]"],
  ["Track Segments", "6", "w-[230px]"],
  ["Nets", "4", "w-[110px]"],
  ["Unrouted", "1", "w-[110px]"],
];

const statusCells: [string, string][] = [
  ["File '/Users/Dustin/Documents/School/UCSD/24FA/ECE 196/pcb-walkthrough-Kombi-D/PCB_Walkthrough/PCB_Walkthr...", "w-[1288px] tracking-[0.001em]"],
  ["Z 1.62", "w-[143px] tracking-[0.01em]"],
  ["X 91.4400  Y 119.3800", "w-[314px] tracking-[0.012em]"],
  ["dx 91.4400  dy 119.3800  dist 150.3757", "w-[502px] tracking-[0.012em]"],
  ["grid X 2.5400  Y 2.5400", "w-[362px] tracking-[0.004em]"],
  ["mm", "w-[110px]"],
  ["Select item(s)", "w-[160px] tracking-[0.01em]"],
];

export default function App() {
  return (
    <div className="h-[2274px] w-[3520px] overflow-hidden bg-white px-28 pt-[76px] font-['Inter','Liberation_Sans',sans-serif] text-[#e2e2e2]">
      <div className="relative flex h-[2050px] w-[3296px] flex-col overflow-hidden rounded-[20px] bg-[#313131] shadow-[0_0_0_1px_#000,0_36px_80px_rgba(0,0,0,0.65)]">
        <div className="grid h-[57px] shrink-0 grid-cols-[1fr_auto_1fr] items-center border-b border-black bg-[#383838]">
          <div className="flex gap-4 pl-4">
            <div className="size-6 rounded-full bg-[#ec6a5e]" />
            <div className="size-6 rounded-full bg-[#f4be4f]" />
            <div className="size-6 rounded-full bg-[#61c554]" />
          </div>
          <div className="-mt-[4px] text-[26px] font-semibold tracking-[0.011em] text-[#b4b4b4]">PCB_Walkthrough — PCB Editor</div>
        </div>

        <div className="mt-[9px] flex h-12 shrink-0 items-center pl-2">
          {topTools.map((t, i) => (
            <TopTool key={i} name={t} />
          ))}
          <div className="ml-[2px] flex h-11 w-[303px] items-center border-2 border-[#858585] bg-[#1e1e1e] pt-[1px] pl-2">
            <div className="mr-[11px] h-7 w-7 border-2 border-black bg-[#b8403a]" />
            <span className="text-[25px] tracking-[-0.003em]">F.Cu (PgUp)</span>
          </div>
          <div className="mr-[5px] ml-2 flex h-10 w-10 items-center justify-center rounded-[10px] bg-white">
            <svg viewBox="0 0 16 16" className="size-4">
              <path d="M2.500 4.500L8 11l5.500-6.500" fill="none" stroke="#222" strokeWidth="2.600" />
            </svg>
          </div>
          {["layerPair", "|", "schematic", "|", "terminal"].map((t, i) => (
            <TopTool key={i} name={t} />
          ))}
        </div>

        <div className="mt-[13px] flex h-[60px] shrink-0 items-center pl-[10px] text-[25px] tracking-[0.012em]">
          <Select className="mt-[2px] w-[421px]">
            <span>Track: 1.016 mm (0.04000 in)</span>
          </Select>
          <div className="ml-1 flex size-[60px] items-center justify-center border-2 border-[#46628a] bg-[#151d2e] pl-[1px]">
            <Icon name="trackWidth" />
          </div>
          <VSep className="mr-[10px] ml-[11px]" />
          <Select className="mt-[2px] w-[358px]">
            <span>Via: use netclass sizes</span>
          </Select>
          <VSep className="mx-[10px]" />
          <Select className="mt-[2px] w-[468px]">
            <span>Grid: 2.5400 mm (0.1000 in)</span>
          </Select>
          <VSep className="mx-[10px]" />
          <Select className="mt-[2px] w-[228px]">
            <span>Zoom 1.50</span>
          </Select>
        </div>

        <div className="mt-[5px] flex h-[1738px] shrink-0 pl-[1px]">
          <div className="flex pt-[2px]">
            <SideBar tools={leftTools} />
          </div>
          <div className="ml-[4px] h-[1737px] w-[2784px] border border-t-2 border-r-[3px] border-b-[3px] border-[#1d1d1d]">
            <Canvas />
          </div>
          <div className="flex w-[83px] pt-[2px] pl-[2px]">
            <SideBar tools={rightTools} />
            <div className="mt-[860px] ml-[4px] size-3 rounded-full bg-[#292929]" />
          </div>
          <SidePanel />
        </div>

        <div className="flex h-[65px] shrink-0 border-b-2 border-black pt-[4px] pl-[22px] text-[22px]">
          {stats.map(([k, v, w]) => (
            <div key={k} className={"flex flex-col " + w}>
              <span className="h-8 leading-8 whitespace-nowrap">{k}</span>
              <span className="h-8 leading-8">{v}</span>
            </div>
          ))}
        </div>
        <div className="flex flex-1 items-center bg-linear-to-b from-[#333333] to-[#282828] pl-[10px] text-[22px] text-[#a8a8a8]">
          {statusCells.map(([text, w]) => (
            <div key={text} className={"shrink-0 whitespace-pre " + w}>
              {text}
            </div>
          ))}
        </div>
        <div className="pointer-events-none absolute inset-0 rounded-[20px] border-2 border-[rgba(255,255,255,0.2)]" />
      </div>
    </div>
  );
}
